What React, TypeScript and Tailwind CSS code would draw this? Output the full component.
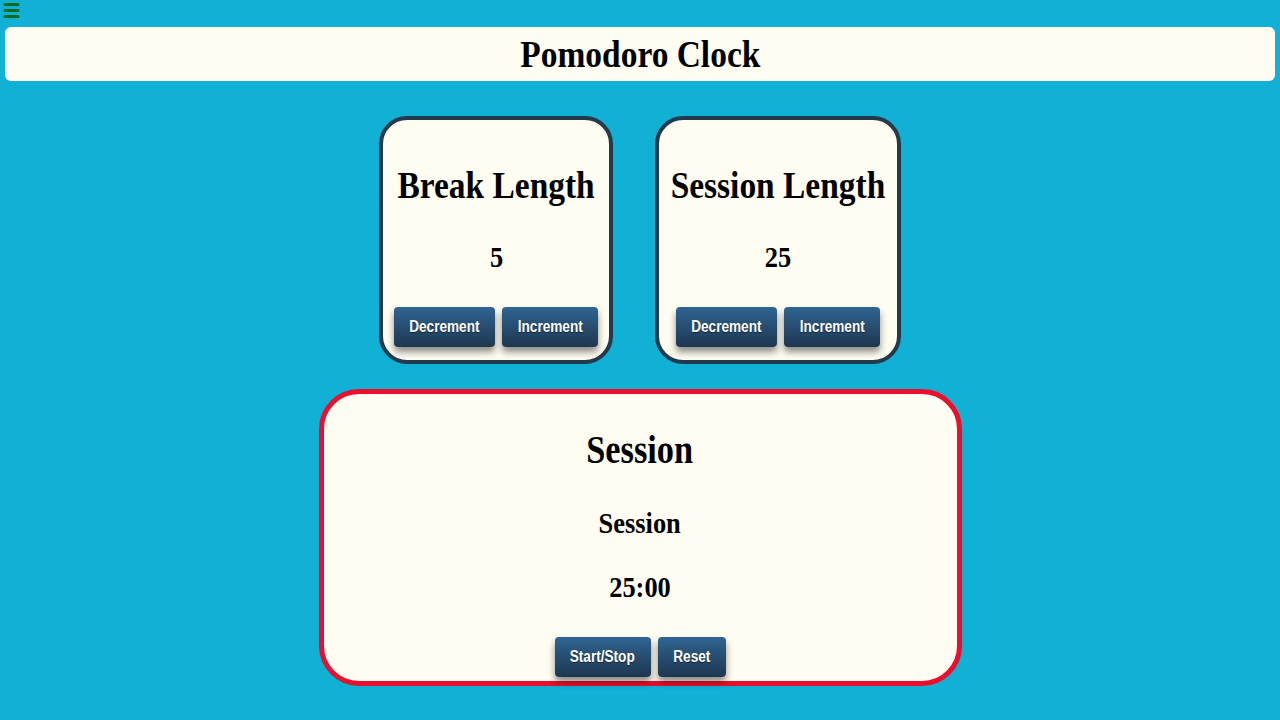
import React from "react";

const T = ({ children, s = "scale-x-[0.88]" }: { children: React.ReactNode; s?: string }) => (
  <span className={`inline-block whitespace-nowrap origin-center ${s}`}>{children}</span>
);

const Btn = ({ label, w }: { label: string; w: string }) => (
  <button
    className={`${w} h-[40px] rounded-[4px] bg-gradient-to-b from-[#2f6593] to-[#1e3750] text-white font-bold text-[16px] shadow-[0_5px_7px_rgba(0,0,0,0.45)] flex items-center justify-center [text-shadow:0_1px_1px_rgba(0,0,0,0.5)]`}
    style={{ fontFamily: '"Liberation Sans", Arial, sans-serif' }}
  >
    <T s="scale-x-[0.85]">{label}</T>
  </button>
);

const LengthCard = ({ title, value, w }: { title: string; value: string; w: string }) => (
  <div className={`${w} h-[248px] rounded-[28px] border-[4px] border-[#233a4d] bg-[#fffdf2] flex flex-col items-center pt-[43px]`}>
    <div className="h-[44px] leading-[44px] text-[38px] font-bold text-black">
      <T>{title}</T>
    </div>
    <div className="mt-[32px] h-[36px] leading-[36px] text-[30px] font-bold text-black">
      <T>{value}</T>
    </div>
    <div className="mt-[32px] flex justify-center gap-[7px]">
      <Btn label="Decrement" w="w-[101px]" />
      <Btn label="Increment" w="w-[96px]" />
    </div>
  </div>
);

export default function App() {
  return (
    <div
      className="min-h-screen w-full bg-[#11b0d5] flex flex-col"
      style={{ fontFamily: '"Liberation Serif", "Times New Roman", serif' }}
    >
      <div className="h-[27px] pl-[3px] pt-[2px]">
        <svg width="17" height="16" viewBox="0 0 17 16">
          <rect x="0.5" y="1" width="16" height="3" rx="1.5" fill="#0b6a22" />
          <rect x="0.5" y="7" width="16" height="3" rx="1.5" fill="#0b6a22" />
          <rect x="0.5" y="13" width="16" height="3" rx="1.5" fill="#0b6a22" />
        </svg>
      </div>
      <div className="mx-[5px] h-[54px] rounded-[6px] bg-[#fffdf2] flex items-center justify-center">
        <h1 className="text-[38px] font-bold text-black leading-none">
          <T>Pomodoro Clock</T>
        </h1>
      </div>

      <div className="mt-[35px] flex justify-center gap-[42px]">
        <LengthCard title="Break Length" value="5" w="w-[234px]" />
        <LengthCard title="Session Length" value="25" w="w-[246px]" />
      </div>

      <div className="mt-[25px] flex justify-center">
        <div className="w-[643px] h-[297px] rounded-[40px] border-[5px] border-[#ec0f2d] bg-[#fffdf2] flex flex-col items-center pt-[34px]">
          <div className="h-[44px] leading-[44px] text-[39px] font-bold text-black">
            <T>Session</T>
          </div>
          <div className="mt-[33px] h-[36px] leading-[36px] text-[30px] font-bold text-black">
            <T>Session</T>
          </div>
          <div className="mt-[28px] h-[36px] leading-[36px] text-[30px] font-bold text-black">
            <T>25:00</T>
          </div>
          <div className="mt-[32px] flex justify-center gap-[7px]">
            <Btn label="Start/Stop" w="w-[96px]" />
            <Btn label="Reset" w="w-[68px]" />
          </div>
        </div>
      </div>
    </div>
  );
}
